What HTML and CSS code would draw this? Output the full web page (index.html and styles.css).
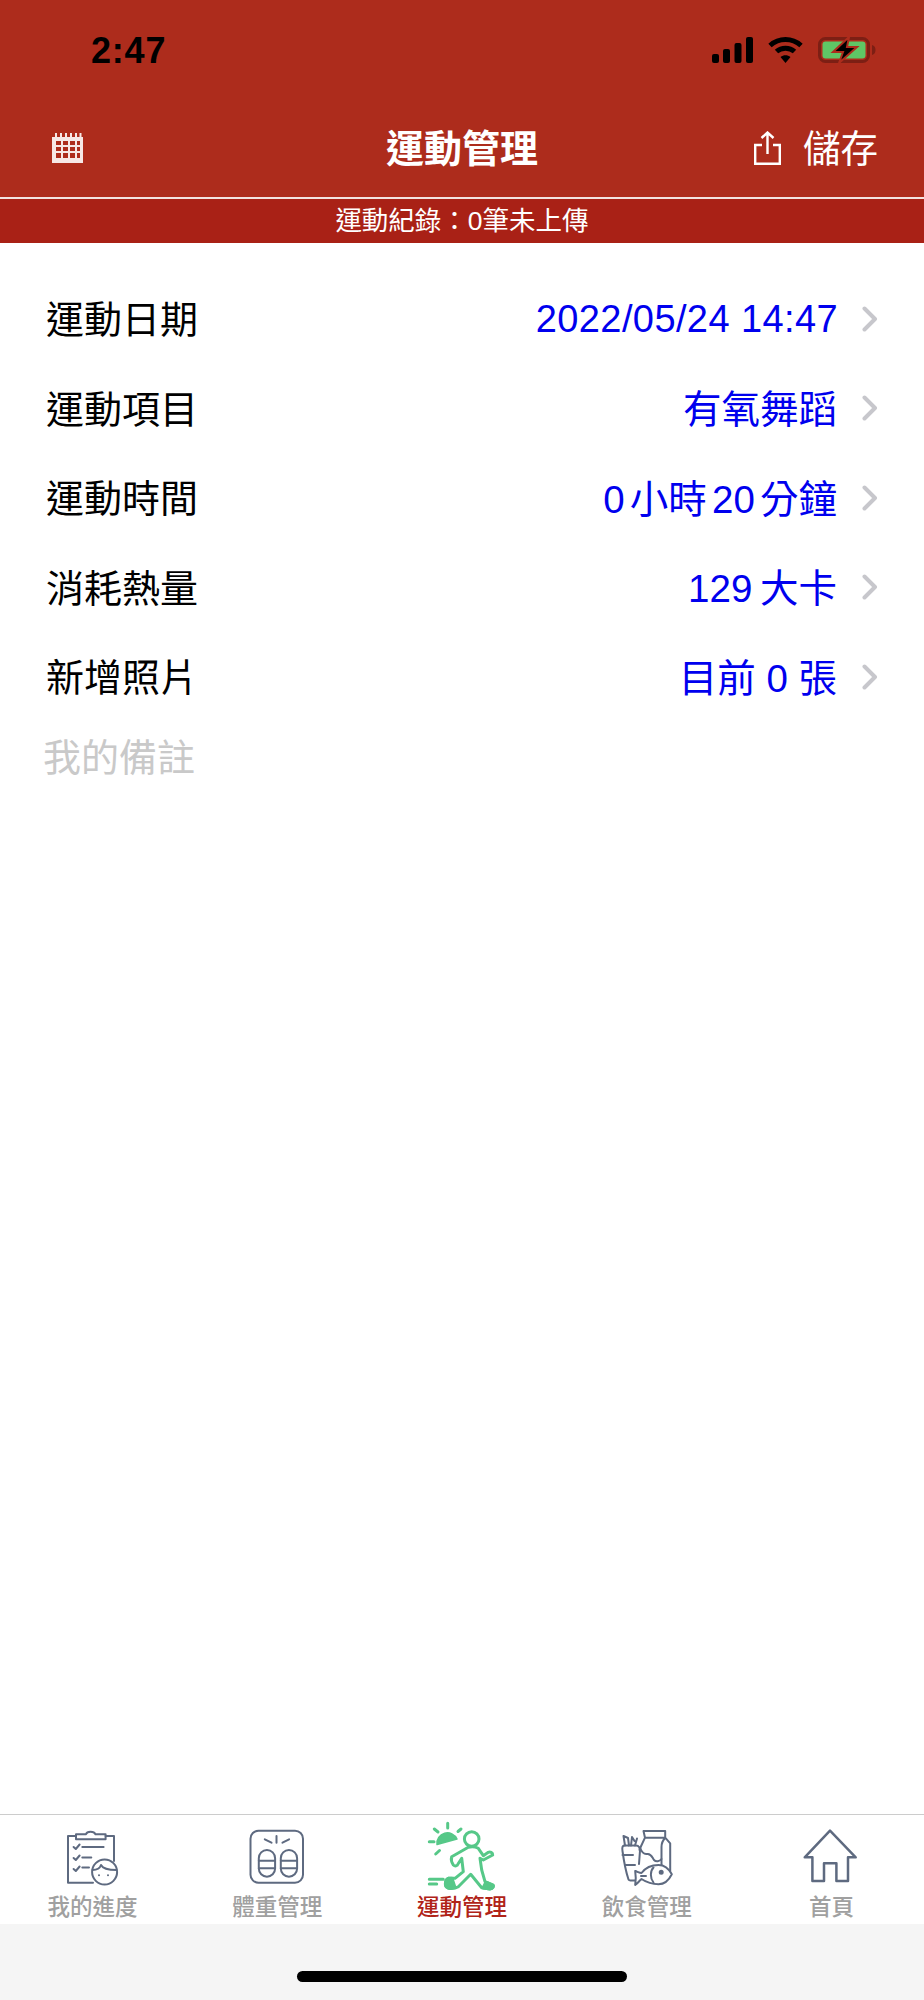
FILE: index.html
```html
<!DOCTYPE html>
<html lang="zh-Hant">
<head>
    <meta charset="UTF-8">
    <meta name="viewport" content="width=device-width, initial-scale=1.0">
    <title>運動管理</title>
    <link rel="stylesheet" href="styles.css">
</head>
<body>
    <div class="app">
        <header class="top">
            <div class="status-bar">
                <span class="clock">2:47</span>
                <div class="status-icons">
                    <svg width="41" height="26" viewBox="0 0 41 26">
                        <rect x="0" y="17" width="7" height="9" rx="2"/>
                        <rect x="11" y="12" width="7" height="14" rx="2"/>
                        <rect x="22.5" y="6" width="7" height="20" rx="2"/>
                        <rect x="34" y="0" width="7" height="26" rx="2"/>
                    </svg>
                    <svg width="35" height="26" viewBox="0 0 35 26">
                        <path d="M2 8.5C11 .5 24 .5 33 8.500" class="wifi-arc"/>
                        <path d="M8.500 14.500C13.500 10 21.500 10 26.500 14.500" class="wifi-arc"/>
                        <path d="M12.500 20L17.500 26L22.500 20C19.500 17.500 15.500 17.500 12.500 20Z"/>
                    </svg>
                    <svg width="58" height="26" viewBox="0 0 58 26">
                        <rect x="1.500" y="1.500" width="49" height="23" rx="6" class="batt-shell"/>
                        <rect x="4.500" y="4.500" width="43" height="17" rx="3" class="batt-fill"/>
                        <path d="M54 8c2.500.5 3.500 2.500 3.500 5s-1 4.500-3.500 5z" class="batt-cap"/>
                        <path d="M31 0L15 15H25L21 26L39 10H29Z" class="batt-bolt"/>
                    </svg>
                </div>
            </div>
            <nav class="nav-bar">
                <svg class="calendar" width="31" height="30" viewBox="0 0 31 30">
                    <path d="M0 4H31V30H0ZM4 8V12H9V8ZM11 8V12H16V8ZM18 8V12H23V8ZM25 8V12H28V8ZM4 14V18H9V14ZM11 14V18H16V14ZM18 14V18H23V14ZM25 14V18H28V14ZM4 20V25H9V20ZM11 20V25H16V20ZM18 20V25H23V20ZM25 20V25H28V20Z" fill-rule="evenodd"/>
                    <path d="M3 0h2v4H3zM8 0h2v4H8zM13 0h2v4h-2zM18 0h2v4h-2zM23 0h2v4h-2zM27.500 0h2v4h-2z"/>
                </svg>
                <h1 class="nav-title">運動管理</h1>
                <div class="nav-save">
                    <svg width="27" height="34" viewBox="0 0 27 34">
                        <path d="M8 14H1.200V32.800H25.800V14H19M13.500 23V1.500M7.500 7L13.500 1.500L19.500 7"/>
                    </svg>
                    <span class="save-text">儲存</span>
                </div>
            </nav>
        </header>
        <div class="upload-band">運動紀錄：0筆未上傳</div>

        <main class="form">
            <div class="row">
                <span class="row-label">運動日期</span>
                <span class="row-value date-value">2022/05/24 14:47</span>
                <svg class="chevron" width="16" height="26" viewBox="0 0 16 26"><path d="M2.500 2.500L13 13L2.500 23.500"/></svg>
            </div>
            <div class="row">
                <span class="row-label">運動項目</span>
                <span class="row-value">有氧舞蹈</span>
                <svg class="chevron" width="16" height="26" viewBox="0 0 16 26"><path d="M2.500 2.500L13 13L2.500 23.500"/></svg>
            </div>
            <div class="row">
                <span class="row-label">運動時間</span>
                <span class="row-value tight-value">0 小時 20 分鐘</span>
                <svg class="chevron" width="16" height="26" viewBox="0 0 16 26"><path d="M2.500 2.500L13 13L2.500 23.500"/></svg>
            </div>
            <div class="row">
                <span class="row-label">消耗熱量</span>
                <span class="row-value kcal-value">129 大卡</span>
                <svg class="chevron" width="16" height="26" viewBox="0 0 16 26"><path d="M2.500 2.500L13 13L2.500 23.500"/></svg>
            </div>
            <div class="row">
                <span class="row-label">新增照片</span>
                <span class="row-value">目前 0 張</span>
                <svg class="chevron" width="16" height="26" viewBox="0 0 16 26"><path d="M2.500 2.500L13 13L2.500 23.500"/></svg>
            </div>
            <div class="note">我的備註</div>
        </main>

        <footer class="tab-bar">
            <div class="tab">
                <svg class="tab-icon" width="72" height="72" viewBox="0 0 72 72">
                    <path d="M20 16H12V62.700H37M49.600 16H58V41"/>
                    <path d="M20 19.300V14.300H30C31 11 38 11 39.500 14.300H49.600V19.300Z"/>
                    <path d="M17.600 27L19.800 29L23.600 24.500M17.600 38L19.800 40L23.600 35.500M17.600 49L19.800 51L23.600 46.500M26.300 27H47.600M26.300 37.500H35.300M26.300 47.500H33"/>
                    <circle cx="48.600" cy="52" r="12.500"/>
                    <path d="M36.500 50C41 50 44 48 45 45C47 49 54 50 60.500 50"/>
                    <circle cx="43" cy="55.300" r="1" class="dot"/>
                    <circle cx="52" cy="55.300" r="1" class="dot"/>
                </svg>
                <span class="tab-label">我的進度</span>
            </div>
            <div class="tab">
                <svg class="tab-icon" width="72" height="72" viewBox="0 0 72 72">
                    <rect x="9.500" y="10.700" width="52.500" height="52" rx="8"/>
                    <path d="M35.500 16V22.700M23.800 19.300L30.500 22.700M48.100 19.300L41.500 22.700"/>
                    <rect x="17.800" y="30" width="16.300" height="26.700" rx="8.150"/>
                    <rect x="39.800" y="30" width="16.300" height="26.700" rx="8.150"/>
                    <path d="M17.800 40.700H34.100M17.800 48.300H34.100M39.800 40.700H56.100M39.800 48.300H56.100"/>
                </svg>
                <span class="tab-label">體重管理</span>
            </div>
            <div class="tab">
                <svg class="tab-icon run-icon" width="72" height="72" viewBox="0 0 72 72">
                    <path d="M11 24.500A10.500 10.500 0 0 1 31 19Z" class="run-fill sun-disc"/>
                    <path d="M21.700 3.300V8M8.300 9L12 12M35 9L32 11.500M3.300 21.700H8M9.700 34L13.500 30.500M3.300 59.300H17.300M3.300 64H10.700"/>
                    <circle cx="45.700" cy="19" r="7.300"/>
                    <path d="M42.300 27.300L25.700 36.700C25 39 26 43 27.300 45C29 46.500 31.500 46 32 44L35.700 38.300L37.300 51.700L29 58.300H22.300C19 60 18 66 22 68C26 69 30 68 32.300 66.700L44.700 54.300L55.700 67.700L64 69C67 69 68 66 66.700 65L59 61.700L55.700 50L54 38.300L57.300 40L66.700 35C67 32.500 64 31.500 62.300 32.300L57.300 35.700L52.300 28.300C49 26.500 45 26.500 42.300 27.300Z"/>
                    <path d="M22.300 58.300C19 60 18 66 22 68C25 68.500 27 68 29 67.500L26 58.300ZM57 68L64 69C67 69 68 66 66.700 65L60 62Z" class="run-fill"/>
                </svg>
                <span class="tab-label tab-active">運動管理</span>
            </div>
            <div class="tab">
                <svg class="tab-icon" width="72" height="72" viewBox="0 0 72 72">
                    <path d="M34 17.700L32.500 11H54.200V17.700M34 17.700H54.200L59.200 23.300V51M34 17.700L29.200 28L28 44M54.200 17.700C52 20 50.500 23 50.500 27V45"/>
                    <path d="M29.200 28C31 33 33 34.500 36 34C40 33 41 37 43 40C45 42 48.500 41.500 50.500 39"/>
                    <path d="M14 25.500L12.500 16L17 18L18 25.500M20 25.500L21 17L23.500 21M24 25.500L26 18.500"/>
                    <path d="M13 25.500C11 26 11 28 11.500 31C13 42 15 52 17.500 59.500C18 61 20 60.500 24 60.500M13 25.500H25C28 25.500 29 28 28.500 30M11.500 35H22M14 45H24"/>
                    <path d="M24.200 51C27 52 29 53 30.500 53C35 47 42 45 47.500 45C53 45 58 49 60.800 54.300C58 60 53 64.300 47.500 64.300C40 64.300 35 62 30.500 59C29 60 27 63 24.200 65C25 60 25 56 24.200 51Z"/>
                    <path d="M42.500 47.500C39 51 39 58 42.500 62.500M30 56H35"/>
                    <circle cx="50.200" cy="52.300" r="1.500" class="icon-dot"/>
                </svg>
                <span class="tab-label">飲食管理</span>
            </div>
            <div class="tab">
                <svg class="tab-icon" width="72" height="72" viewBox="0 0 72 72">
                    <path d="M16.400 61V37.300H8.700L34 10.700L59.700 37.300H52V61H40.400V43.300H28V61Z" class="home-line"/>
                </svg>
                <span class="tab-label">首頁</span>
            </div>
        </footer>
        <div class="home-area">
            <div class="home-indicator"></div>
        </div>
    </div>
</body>
</html>
```

FILE: styles.css
```css
:root {
    --brand-red: #ad2c1c;
    --band-red: #a92116;
    --value-blue: #0000ee;
    --icon-gray: #5e6a80;
    --run-green: #56c888;
    --cjk-stack: "Liberation Sans", "Noto Sans CJK TC", sans-serif;
}

body {
    margin: 0;
    background-color: #ffffff;
    font-family: var(--cjk-stack);
    color: #000000;
}

.app {
    display: flex;
    flex-direction: column;
    height: 2000px;
    overflow: hidden;
}

.top {
    background-color: var(--brand-red);
    height: 197px;
    border-bottom: 2px solid #f3e3e0;
}

.status-bar {
    display: flex;
    align-items: center;
    justify-content: space-between;
    height: 26px;
    padding: 37px 48px 0 91px;
}

.clock {
    padding-top: 2px;
    font-size: 36px;
    font-weight: 700;
    line-height: 26px;
    letter-spacing: 0.800px;
}

.status-icons {
    display: flex;
    align-items: center;
    gap: 15px;
}

.wifi-arc {
    fill: none;
    stroke: #000000;
    stroke-width: 5px;
}

.batt-shell {
    fill: none;
    stroke: #7d1f14;
    stroke-width: 3px;
}

.batt-fill {
    fill: #5fc765;
}

.batt-cap {
    fill: #7d1f14;
}

.batt-bolt {
    fill: #000000;
    stroke: var(--brand-red);
    stroke-width: 2px;
}

.nav-bar {
    display: flex;
    align-items: center;
    justify-content: space-between;
    position: relative;
    height: 50px;
    margin-top: 60px;
    padding: 0 46px 0 52px;
}

.calendar {
    fill: #f6e8e6;
}

.nav-title {
    position: absolute;
    left: 0;
    right: 0;
    margin: 0;
    padding-bottom: 6px;
    font-size: 38px;
    font-weight: 700;
    text-align: center;
    color: #ffffff;
}

.nav-save {
    display: flex;
    align-items: center;
    gap: 22px;
    font-size: 37.500px;
    color: #ffffff;
}

.save-text {
    padding-bottom: 6px;
}

.nav-save svg {
    fill: none;
    stroke: #ffffff;
    stroke-width: 2.400px;
}

.upload-band {
    height: 44px;
    background-color: var(--band-red);
    font-size: 26.500px;
    line-height: 44px;
    text-align: center;
    color: #ffffff;
}

.form {
    flex: 1;
    padding: 29px 46px 0;
}

.row {
    display: flex;
    align-items: center;
    height: 89.500px;
    font-size: 38px;
}

.row-label {
    flex: 1;
}

.row-value {
    margin-right: 25px;
    font-size: 38.500px;
    color: var(--value-blue);
}

.date-value {
    padding-top: 6px;
    margin-right: 24px;
    font-size: 38px;
    letter-spacing: 0.400px;
}

.tight-value {
    word-spacing: -5.500px;
}

.kcal-value {
    word-spacing: -3px;
}

.chevron {
    padding-top: 4px;
    fill: none;
    stroke: #c7c7cc;
    stroke-width: 4px;
    stroke-linecap: round;
    stroke-linejoin: round;
}

.note {
    margin: 7px 0 0 -3px;
    font-size: 38px;
    color: #c9c9c9;
}

.tab-bar {
    display: grid;
    grid-template-columns: repeat(5, 1fr);
    height: 109px;
    border-top: 1px solid #cccccc;
    background-color: #ffffff;
}

.tab {
    display: flex;
    flex-direction: column;
    align-items: center;
    padding-top: 5px;
}

.tab-icon {
    display: block;
    fill: none;
    stroke: var(--icon-gray);
    stroke-width: 2px;
    stroke-linecap: round;
    stroke-linejoin: round;
}

.tab-icon .dot {
    fill: var(--icon-gray);
    stroke: none;
}

.tab-icon .icon-dot {
    fill: var(--icon-gray);
}

.tab-icon .home-line {
    stroke-width: 2.500px;
}

.run-icon {
    stroke: var(--run-green);
    stroke-width: 3px;
}

.run-fill {
    fill: var(--run-green);
}

.run-icon .sun-disc {
    stroke-width: 1.500px;
}

.tab-label {
    margin-top: 4px;
    font-size: 22.500px;
    font-weight: 500;
    line-height: 24px;
    color: #a0a0a0;
}

.tab-active {
    color: #b02318;
}

.home-area {
    display: flex;
    justify-content: center;
    height: 76px;
    background-color: #f5f5f5;
}

.home-indicator {
    width: 330px;
    height: 11px;
    margin-top: 47px;
    border-radius: 6px;
    background-color: #000000;
}
```
